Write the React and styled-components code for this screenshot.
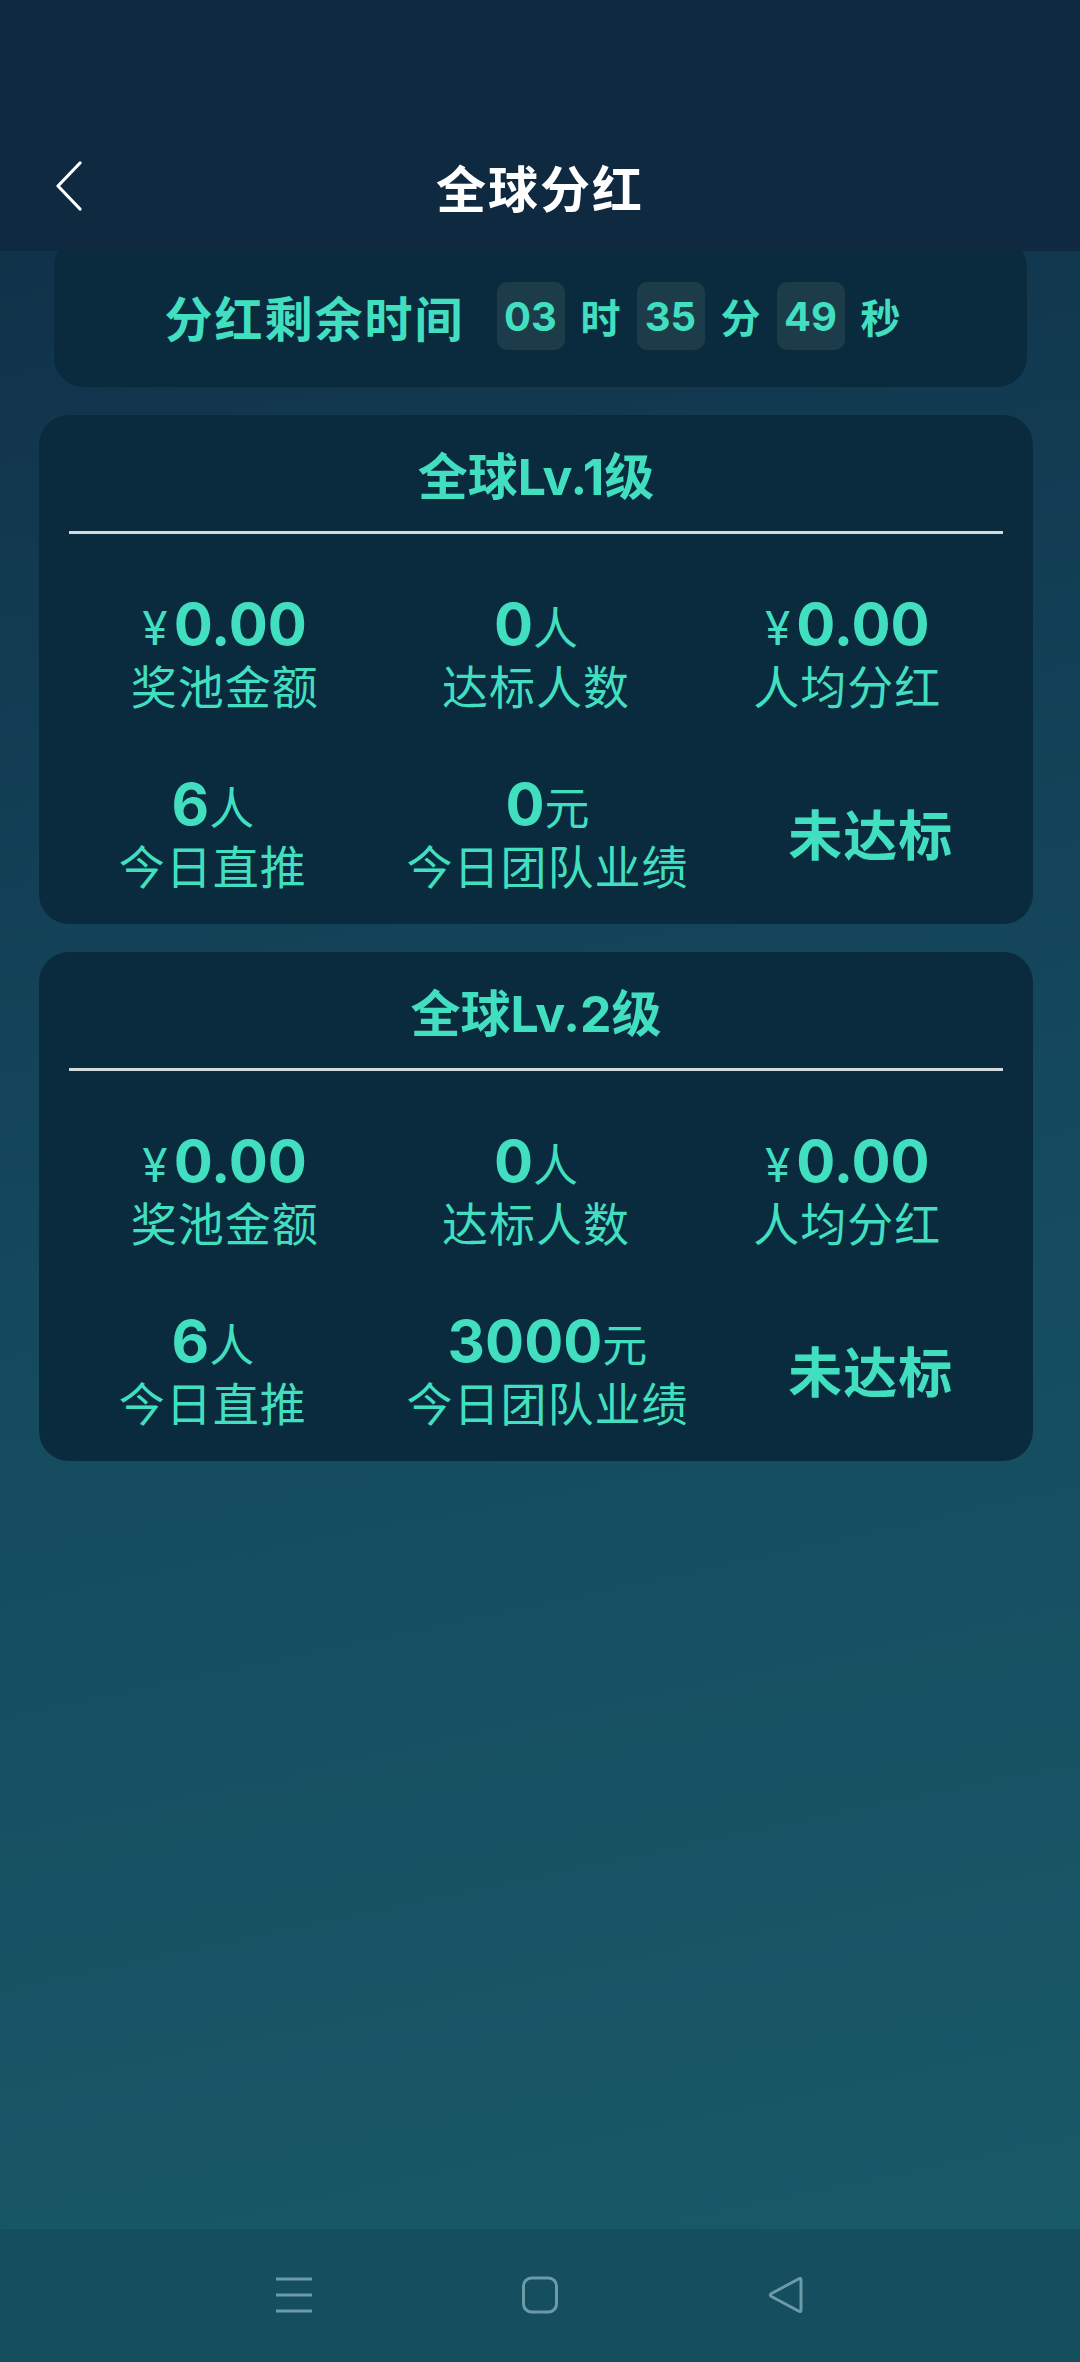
import React from "react";
import styled, { createGlobalStyle } from "styled-components";

const teal = "#41dfc0";

const GlobalStyle = createGlobalStyle`
  html, body {
    margin: 0;
    padding: 0;
  }
  body {
    font-family: Inter, "Noto Sans CJK SC", "Noto Sans", sans-serif;
  }
`;

const levels = [
  { name: "全球Lv.1级", pool: "0.00", qualified: 0, avg: "0.00", direct: 6, team: "0" },
  { name: "全球Lv.2级", pool: "0.00", qualified: 0, avg: "0.00", direct: 6, team: "3000" },
];

export default function App() {
  return (
    <>
      <GlobalStyle />
      <Page>
        <Header>
          <BackButton>
            <svg width="28" height="50" viewBox="0 0 28 50" fill="none">
              <path d="M25 2 L3 25 L25 48" stroke="#fff" strokeWidth="3.2" strokeLinecap="round" strokeLinejoin="round" />
            </svg>
          </BackButton>
          <Title>全球分红</Title>
          <span />
        </Header>

        <Main>
          <TimerCard>
            <TimerLabel>分红剩余时间</TimerLabel>
            <TimeBox>03</TimeBox>
            <TimeUnit>时</TimeUnit>
            <TimeBox>35</TimeBox>
            <TimeUnit>分</TimeUnit>
            <TimeBox>49</TimeBox>
            <TimeUnit>秒</TimeUnit>
          </TimerCard>

          {levels.map((lv) => (
            <LevelCard key={lv.name}>
              <CardTitle>{lv.name}</CardTitle>
              <Divider />
              <StatRow>
                <Stat>
                  <Value><Prefix>¥</Prefix>{lv.pool}</Value>
                  <Label>奖池金额</Label>
                </Stat>
                <Stat>
                  <Value>{lv.qualified}<Unit>人</Unit></Value>
                  <Label>达标人数</Label>
                </Stat>
                <Stat>
                  <Value><Prefix>¥</Prefix>{lv.avg}</Value>
                  <Label>人均分红</Label>
                </Stat>
              </StatRow>
              <StatRow $second>
                <Stat>
                  <Value>{lv.direct}<Unit>人</Unit></Value>
                  <Label>今日直推</Label>
                </Stat>
                <Stat>
                  <Value>{lv.team}<Unit>元</Unit></Value>
                  <Label>今日团队业绩</Label>
                </Stat>
                <Status>未达标</Status>
              </StatRow>
            </LevelCard>
          ))}
        </Main>

        <NavBar>
          <svg width="38" height="38" viewBox="0 0 38 38">
            <g stroke="#6b9ba8" strokeWidth="3">
              <line x1="1" y1="3" x2="37" y2="3" />
              <line x1="1" y1="19" x2="37" y2="19" />
              <line x1="1" y1="35" x2="37" y2="35" />
            </g>
          </svg>
          <svg width="38" height="38" viewBox="0 0 38 38" fill="none">
            <rect x="2.5" y="2" width="33" height="34" rx="8" stroke="#6b9ba8" strokeWidth="3" />
          </svg>
          <svg width="38" height="38" viewBox="0 0 38 38" fill="none">
            <path d="M34 4 Q34 1.5 31.5 3 L4.5 17.5 Q2 19 4.5 20.5 L31.5 35 Q34 36.5 34 34 Z" stroke="#6b9ba8" strokeWidth="3" strokeLinejoin="round" />
          </svg>
        </NavBar>
      </Page>
    </>
  );
}

const Page = styled.div`
  min-height: 100vh;
  display: flex;
  flex-direction: column;
  background: linear-gradient(168deg, #0f2c44 0%, #123b52 25%, #154b5f 55%, #195b69 100%);
`;

const Header = styled.header`
  position: relative;
  z-index: 2;
  height: 251px;
  box-sizing: border-box;
  padding-top: 120px;
  background: #0f2a40;
  display: grid;
  grid-template-columns: 1fr auto 1fr;
  align-items: center;
`;

const BackButton = styled.div`
  padding-left: 55px;
  display: flex;
  align-items: center;
`;

const Title = styled.h1`
  margin: 0;
  color: #fff;
  font-size: 50px;
  font-weight: 700;
  letter-spacing: 2px;
`;

const Main = styled.main`
  flex: 1;
  padding: 0 47px 0 39px;
  display: flex;
  flex-direction: column;
  gap: 28px;
`;

const TimerCard = styled.div`
  margin: -14px 6px 0 15px;
  height: 150px;
  border-radius: 30px;
  background: #0a2b3d;
  display: flex;
  align-items: center;
  justify-content: center;
  padding-top: 8px;
  box-sizing: border-box;
  color: ${teal};
  font-weight: 700;
`;

const TimerLabel = styled.span`
  font-size: 48px;
  letter-spacing: 2px;
  margin-right: 32px;
`;

const TimeBox = styled.span`
  width: 68px;
  height: 68px;
  border-radius: 10px;
  background: #1c3c4a;
  display: flex;
  align-items: center;
  justify-content: center;
  font-size: 40px;
`;

const TimeUnit = styled.span`
  font-size: 40px;
  margin: 0 16px;
`;

const LevelCard = styled.section`
  background: #0a2b3d;
  border-radius: 30px;
  padding: 0 30px 29px;
  color: ${teal};
`;

const CardTitle = styled.h2`
  margin: 0;
  height: 116px;
  display: flex;
  align-items: center;
  justify-content: center;
  font-size: 50px;
  font-weight: 700;
`;

const Divider = styled.div`
  height: 3px;
  background: #d3dadd;
`;

const StatRow = styled.div`
  margin-top: ${(p) => (p.$second ? "54px" : "55px")};
  display: flex;
  justify-content: space-around;
  align-items: center;
`;

const Stat = styled.div`
  display: flex;
  flex-direction: column;
  align-items: center;
`;

const Value = styled.div`
  height: 70px;
  line-height: 70px;
  font-size: 58px;
  font-weight: 700;
  white-space: nowrap;
`;

const Prefix = styled.span`
  font-size: 46px;
  font-weight: 400;
  margin-right: 6px;
`;

const Unit = styled.span`
  font-size: 45px;
  font-weight: 400;
`;

const Label = styled.div`
  line-height: 56px;
  font-size: 46px;
  letter-spacing: 1px;
`;

const Status = styled.div`
  font-size: 54px;
  font-weight: 700;
  letter-spacing: 1px;
`;

const NavBar = styled.nav`
  height: 133px;
  background: #154e5f;
  display: flex;
  align-items: center;
  justify-content: center;
  gap: 208px;
  padding-bottom: 2px;
  box-sizing: border-box;
`;
